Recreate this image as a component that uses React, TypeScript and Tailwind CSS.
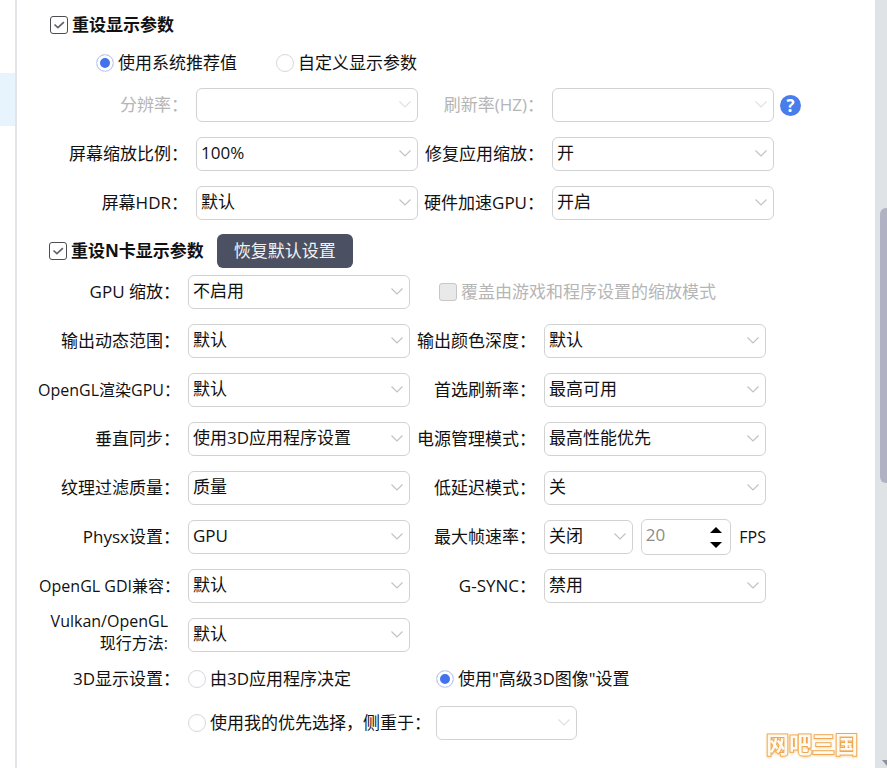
import React from "react";

type SelectProps = {
  id: string;
  value?: string;
  disabled?: boolean;
};

const SelectBox = ({ id, value = "", disabled }: SelectProps) => (
  <div className="relative min-w-0 flex-1">
    <select
      id={id}
      defaultValue={value}
      disabled={disabled}
      className="block h-[34px] w-full appearance-none rounded-md border border-[#d2d2d2] bg-white pl-1 pr-6 pb-[2px] text-[17px] text-[#111] opacity-100 outline-none"
    >
      <option value={value}>{value}</option>
    </select>
    <svg
      viewBox="0 0 12 7"
      className={`pointer-events-none absolute right-[7px] top-[13px] h-[7px] w-3 ${disabled ? "text-[#e0e0e0]" : "text-[#c2c2c2]"}`}
      fill="none"
      stroke="currentColor"
      strokeWidth="1.2"
    >
      <path d="M0.5 0.5l5.5 5.5 5.5-5.5" />
    </svg>
  </div>
);

type LabelProps = {
  htmlFor: string;
  children: React.ReactNode;
  muted?: boolean;
  small?: boolean;
};

const RowLabel = ({ htmlFor, children, muted, small }: LabelProps) => (
  <label
    htmlFor={htmlFor}
    className={`pr-2 text-right whitespace-nowrap ${small ? "text-[16px] leading-[22px]" : "text-[17px] leading-6"} ${muted ? "text-[#b5b5b5]" : "text-[#111]"}`}
  >
    {children}
  </label>
);

type RadioProps = {
  name: string;
  label: string;
  checked?: boolean;
};

const Radio = ({ name, label, checked }: RadioProps) => (
  <label className="flex items-center gap-1 text-[17px] leading-6 whitespace-nowrap">
    <input
      type="radio"
      name={name}
      defaultChecked={checked}
      className="h-[18px] w-[18px] shrink-0 appearance-none rounded-full border border-[#d6d8de] bg-white checked:border-[#d5dcf0] checked:bg-[#4472ec] checked:shadow-[inset_0_0_0_3px_#fff]"
    />
    {label}
  </label>
);

type CheckProps = {
  label: string;
};

const SectionCheck = ({ label }: CheckProps) => (
  <label className="flex items-center gap-1 text-[17px] leading-6 font-bold whitespace-nowrap">
    <span className="relative h-[18px] w-[18px]">
      <input
        type="checkbox"
        defaultChecked
        className="peer block h-[18px] w-[18px] appearance-none rounded-[3px] border border-[#4c4c55] bg-white"
      />
      <svg
        viewBox="0 0 18 18"
        className="pointer-events-none absolute inset-0 hidden text-[#62626a] peer-checked:block"
        fill="none"
        stroke="currentColor"
        strokeWidth="1.7"
      >
        <path d="M4.5 8.5l3.4 3.2 6-5.6" />
      </svg>
    </span>
    {label}
  </label>
);

const nvidiaRows = [
  { left: "输出动态范围：", leftValue: "默认", right: "输出颜色深度：", rightValue: "默认" },
  { left: "OpenGL渲染GPU：", leftValue: "默认", right: "首选刷新率：", rightValue: "最高可用", small: true },
  { left: "垂直同步：", leftValue: "使用3D应用程序设置", right: "电源管理模式：", rightValue: "最高性能优先" },
  { left: "纹理过滤质量：", leftValue: "质量", right: "低延迟模式：", rightValue: "关" },
];

const App = () => {
  return (
    <div className="relative flex min-h-screen overflow-hidden bg-white font-['Open_Sans','Noto_Sans_CJK_SC',sans-serif] text-[#111]">
      {/* Sidebar edge */}
      <aside className="w-[17px] shrink-0 border-r-2 border-[#e4e4e8] pt-[73px]">
        <div className="h-[53px] bg-[#e7f4fe]"></div>
      </aside>

      <main className="min-w-0 flex-1 pt-[13px]">
        {/* Display parameters */}
        <section>
          <div className="pl-[33px]">
            <SectionCheck label="重设显示参数" />
          </div>
          <div className="mt-[14px] flex gap-[39px] pl-[79px]">
            <Radio name="display" label="使用系统推荐值" checked />
            <Radio name="display" label="自定义显示参数" />
          </div>

          <div className="mt-[13px] grid grid-cols-[179px_minmax(0,1fr)_134px_minmax(0,1fr)_101px] items-center gap-y-[15px]">
            <RowLabel htmlFor="resolution" muted>分辨率：</RowLabel>
            <SelectBox id="resolution" disabled />
            <RowLabel htmlFor="refresh" muted>刷新率(HZ)：</RowLabel>
            <SelectBox id="refresh" disabled />
            <button
              type="button"
              aria-label="帮助"
              className="ml-[6px] flex h-[21px] w-[21px] items-center justify-center rounded-full bg-[#4a7dec] text-[17px] leading-none font-bold text-white"
            >
              ?
            </button>

            <RowLabel htmlFor="scale">屏幕缩放比例：</RowLabel>
            <SelectBox id="scale" value="100%" />
            <RowLabel htmlFor="fixScale">修复应用缩放：</RowLabel>
            <SelectBox id="fixScale" value="开" />
            <span></span>

            <RowLabel htmlFor="hdr">屏幕HDR：</RowLabel>
            <SelectBox id="hdr" value="默认" />
            <RowLabel htmlFor="hags">硬件加速GPU：</RowLabel>
            <SelectBox id="hags" value="开启" />
          </div>
        </section>

        {/* Nvidia parameters */}
        <section className="mt-[14px]">
          <div className="flex items-center gap-[13px] pl-8">
            <SectionCheck label="重设N卡显示参数" />
            <button
              type="button"
              className="h-[34px] rounded-md bg-[#4b5163] px-[17px] text-[17px] leading-6 text-[#f1f1f4]"
            >
              恢复默认设置
            </button>
          </div>

          <div className="mt-[7px] grid grid-cols-[171px_minmax(0,1fr)_134px_minmax(0,1fr)_109px] items-center gap-y-[15px]">
            <RowLabel htmlFor="gpuScale">GPU 缩放：</RowLabel>
            <SelectBox id="gpuScale" value="不启用" />
            <label className="col-span-3 flex items-center gap-1 pl-[29px] text-[17px] leading-6 whitespace-nowrap text-[#b5b5b5]">
              <input
                type="checkbox"
                disabled
                className="h-[18px] w-[18px] appearance-none rounded-[3px] border border-[#c6c6c6] bg-[#e9e9e9]"
              />
              覆盖由游戏和程序设置的缩放模式
            </label>

            {nvidiaRows.map((row) => (
              <React.Fragment key={row.left}>
                <RowLabel htmlFor={row.left} small={row.small}>{row.left}</RowLabel>
                <SelectBox id={row.left} value={row.leftValue} />
                <RowLabel htmlFor={row.right}>{row.right}</RowLabel>
                <SelectBox id={row.right} value={row.rightValue} />
                <span></span>
              </React.Fragment>
            ))}

            <RowLabel htmlFor="physx">Physx设置：</RowLabel>
            <SelectBox id="physx" value="GPU" />
            <RowLabel htmlFor="maxFps">最大帧速率：</RowLabel>
            <div className="col-span-2 flex h-[34px] items-center pr-[109px]">
              <SelectBox id="maxFps" value="关闭" />
              <div className="ml-2 flex h-9 min-w-0 flex-1 items-center rounded-md border border-[#d2d2d2]">
                <input
                  type="number"
                  aria-label="FPS"
                  defaultValue={20}
                  disabled
                  className="min-w-0 flex-1 [appearance:textfield] bg-transparent pb-1 pl-1 text-[17px] text-[#8c8c8c]"
                />
                <div className="mr-2 flex flex-col gap-[9px]">
                  <button type="button" aria-label="增加">
                    <svg viewBox="0 0 12 6" className="block h-[6px] w-3">
                      <path d="M0 6l6-6 6 6z" />
                    </svg>
                  </button>
                  <button type="button" aria-label="减少">
                    <svg viewBox="0 0 12 6" className="block h-[6px] w-3">
                      <path d="M0 0l6 6 6-6z" />
                    </svg>
                  </button>
                </div>
              </div>
              <span className="ml-2 text-[16px] leading-6">FPS</span>
            </div>

            <RowLabel htmlFor="gdi" small>OpenGL GDI兼容：</RowLabel>
            <SelectBox id="gdi" value="默认" />
            <RowLabel htmlFor="gsync">G-SYNC：</RowLabel>
            <SelectBox id="gsync" value="禁用" />

            <div className="col-start-1 -mt-2 -mb-1 flex flex-col self-start pr-3">
              <RowLabel htmlFor="vulkan" small>
                Vulkan/OpenGL
                <br />
                现行方法:
              </RowLabel>
            </div>
            <SelectBox id="vulkan" value="默认" />
          </div>

          {/* 3D display settings */}
          <div
            role="radiogroup"
            className="mt-[15px] grid grid-cols-[171px_minmax(0,1fr)_134px_minmax(0,1fr)_109px] items-center gap-y-[15px]"
          >
            <span className="pr-2 text-right text-[17px] leading-6">3D显示设置：</span>
            <Radio name="mode3d" label="由3D应用程序决定" />
            <div className="col-span-3 pl-[26px]">
              <Radio name="mode3d" label={'使用"高级3D图像"设置'} checked />
            </div>

            <div className="col-start-2">
              <Radio name="mode3d" label="使用我的优先选择，侧重于：" />
            </div>
            <div className="col-span-2 ml-[26px] flex w-[141px]">
              <SelectBox id="prefer" disabled />
            </div>
          </div>
        </section>
      </main>

      {/* Scrollbar */}
      <div className="flex w-3 shrink-0 flex-col items-end overflow-hidden bg-[#dfe3e6] pt-[208px]">
        <div className="h-[275px] w-[7px] rounded-l-md bg-[#b0b2c3]"></div>
        <svg viewBox="0 0 5 6" className="mt-auto mb-[2px] h-[6px] w-[5px]">
          <path d="M0 0h5v6z" fill="#8f929c" />
        </svg>
      </div>

      {/* Watermark */}
      <div className="pointer-events-none absolute right-[29px] bottom-2 text-[23px] leading-8 font-bold text-[#fffaf2] [-webkit-text-stroke:2px_#f0a850] [paint-order:stroke_fill] drop-shadow-[0_1px_1px_#f8d9a8]">
        网吧三国
      </div>
    </div>
  );
};

export default App;
